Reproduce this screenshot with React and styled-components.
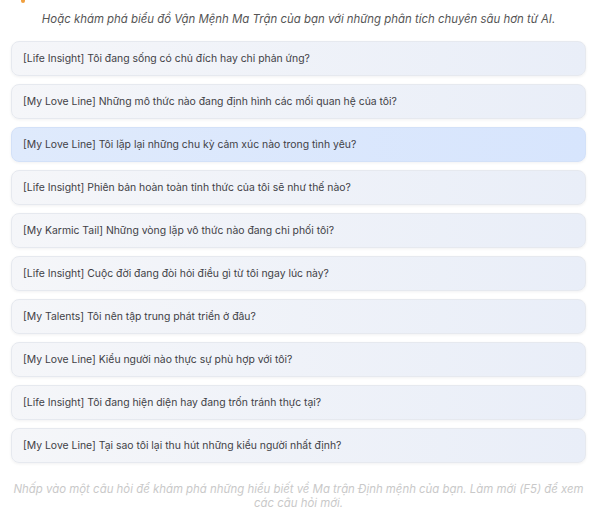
import styled, { createGlobalStyle } from "styled-components";

const questions = [
  "[Life Insight] Tôi đang sống có chủ đích hay chỉ phản ứng?",
  "[My Love Line] Những mô thức nào đang định hình các mối quan hệ của tôi?",
  "[My Love Line] Tôi lặp lại những chu kỳ cảm xúc nào trong tình yêu?",
  "[Life Insight] Phiên bản hoàn toàn tỉnh thức của tôi sẽ như thế nào?",
  "[My Karmic Tail] Những vòng lặp vô thức nào đang chi phối tôi?",
  "[Life Insight] Cuộc đời đang đòi hỏi điều gì từ tôi ngay lúc này?",
  "[My Talents] Tôi nên tập trung phát triển ở đâu?",
  "[My Love Line] Kiểu người nào thực sự phù hợp với tôi?",
  "[Life Insight] Tôi đang hiện diện hay đang trốn tránh thực tại?",
  "[My Love Line] Tại sao tôi lại thu hút những kiểu người nhất định?",
];

export default function App() {
  return (
    <>
      <GlobalStyle />
      <Page>
        <IconTip />
        <Intro>
          Hoặc khám phá biểu đồ Vận Mệnh Ma Trận của bạn với những phân tích
          chuyên sâu hơn từ AI.
        </Intro>
        <QuestionList>
          {questions.map((q, i) => (
            <QuestionCard key={i} $active={i === 2}>
              {q}
            </QuestionCard>
          ))}
        </QuestionList>
        <Hint>
          Nhấp vào một câu hỏi để khám phá những hiểu biết về Ma trận Định
          mệnh của bạn. Làm mới (F5) để xem các câu hỏi mới.
        </Hint>
      </Page>
    </>
  );
}

const GlobalStyle = createGlobalStyle`
  body {
    margin: 0;
    background: #ffffff;
    font-family: Inter, "Noto Sans", sans-serif;
  }
`;

const Page = styled.div`
  position: relative;
  width: 600px;
  padding: 11px 14px 0 11px;
  box-sizing: border-box;
`;

const IconTip = styled.span`
  position: absolute;
  left: 21px;
  top: -3px;
  width: 4px;
  height: 6px;
  border-radius: 2px;
  background: #f0a040;
`;

const Intro = styled.p`
  margin: 0;
  text-align: center;
  font-style: italic;
  font-size: 11.4px;
  line-height: 16px;
  color: #555;
`;

const QuestionList = styled.ul`
  list-style: none;
  margin: 14px 0 0;
  padding: 0;
  display: flex;
  flex-direction: column;
  gap: 8px;
`;

const QuestionCard = styled.li`
  padding: 10px 11px;
  font-size: 10.4px;
  line-height: 13px;
  color: #3f3f46;
  border-radius: 8px;
  border: 1px solid ${(p) => (p.$active ? "#d3e1f8" : "#e6e9ef")};
  background: ${(p) =>
    p.$active
      ? "linear-gradient(90deg, #dfeafc, #d7e5fd)"
      : "linear-gradient(90deg, #f5f6f9, #e9eef8)"};
  box-shadow: 0 1px 3px rgba(15, 23, 42, 0.06);
  cursor: pointer;
`;

const Hint = styled.p`
  margin: 19px auto 0;
  width: 575px;
  text-align: center;
  font-style: italic;
  font-size: 11.4px;
  line-height: 14px;
  color: #c9c9c9;
`;
